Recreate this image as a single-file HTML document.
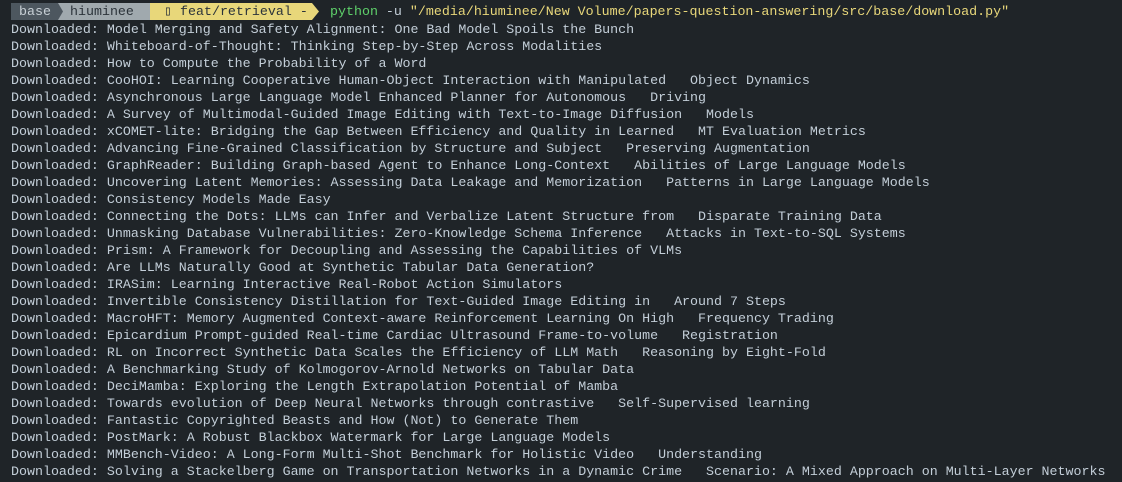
<!DOCTYPE html>
<html><head><meta charset="utf-8"><style>
html,body{margin:0;padding:0;background:#1f2428;width:1122px;height:482px;overflow:hidden}
pre{position:absolute;left:11px;top:21px;margin:0;font-family:"Liberation Mono",monospace;font-size:13.32px;line-height:17px;color:#c3ced8;white-space:pre}
.bar{position:absolute;top:3px;left:0;width:1122px;height:17px;font-family:"Liberation Mono",monospace;font-size:13.32px;line-height:17px}
.bar span.t{position:absolute;top:0;white-space:pre}
</style></head><body>
<div class="bar"><svg style="position:absolute;left:0;top:0" width="330" height="17"><polygon points="11,0 150,0 155,8.5 150,17 11,17" fill="#a0a9ae"/><polygon points="11,0 58,0 63,8.5 58,17 11,17" fill="#4d575f"/><polygon points="150,0 312,0 319,8.5 312,17 150,17" fill="#e8d77a"/></svg><span class="t" style="left:19px;color:#c8d0d6">base</span><span class="t" style="left:70px;color:#2b333a">hiuminee</span><span class="t" style="left:164px;color:#2b333a">▯ feat/retrieval -</span><span class="t" style="left:330px;color:#c3ced8"><span style="color:#5ed06a">python</span> -u <span style="color:#e8d77a">"/media/hiuminee/New Volume/papers-question-answering/src/base/download.py"</span></span></div>
<pre>Downloaded: Model Merging and Safety Alignment: One Bad Model Spoils the Bunch
Downloaded: Whiteboard-of-Thought: Thinking Step-by-Step Across Modalities
Downloaded: How to Compute the Probability of a Word
Downloaded: CooHOI: Learning Cooperative Human-Object Interaction with Manipulated   Object Dynamics
Downloaded: Asynchronous Large Language Model Enhanced Planner for Autonomous   Driving
Downloaded: A Survey of Multimodal-Guided Image Editing with Text-to-Image Diffusion   Models
Downloaded: xCOMET-lite: Bridging the Gap Between Efficiency and Quality in Learned   MT Evaluation Metrics
Downloaded: Advancing Fine-Grained Classification by Structure and Subject   Preserving Augmentation
Downloaded: GraphReader: Building Graph-based Agent to Enhance Long-Context   Abilities of Large Language Models
Downloaded: Uncovering Latent Memories: Assessing Data Leakage and Memorization   Patterns in Large Language Models
Downloaded: Consistency Models Made Easy
Downloaded: Connecting the Dots: LLMs can Infer and Verbalize Latent Structure from   Disparate Training Data
Downloaded: Unmasking Database Vulnerabilities: Zero-Knowledge Schema Inference   Attacks in Text-to-SQL Systems
Downloaded: Prism: A Framework for Decoupling and Assessing the Capabilities of VLMs
Downloaded: Are LLMs Naturally Good at Synthetic Tabular Data Generation?
Downloaded: IRASim: Learning Interactive Real-Robot Action Simulators
Downloaded: Invertible Consistency Distillation for Text-Guided Image Editing in   Around 7 Steps
Downloaded: MacroHFT: Memory Augmented Context-aware Reinforcement Learning On High   Frequency Trading
Downloaded: Epicardium Prompt-guided Real-time Cardiac Ultrasound Frame-to-volume   Registration
Downloaded: RL on Incorrect Synthetic Data Scales the Efficiency of LLM Math   Reasoning by Eight-Fold
Downloaded: A Benchmarking Study of Kolmogorov-Arnold Networks on Tabular Data
Downloaded: DeciMamba: Exploring the Length Extrapolation Potential of Mamba
Downloaded: Towards evolution of Deep Neural Networks through contrastive   Self-Supervised learning
Downloaded: Fantastic Copyrighted Beasts and How (Not) to Generate Them
Downloaded: PostMark: A Robust Blackbox Watermark for Large Language Models
Downloaded: MMBench-Video: A Long-Form Multi-Shot Benchmark for Holistic Video   Understanding
Downloaded: Solving a Stackelberg Game on Transportation Networks in a Dynamic Crime   Scenario: A Mixed Approach on Multi-Layer Networks</pre>
</body></html>
